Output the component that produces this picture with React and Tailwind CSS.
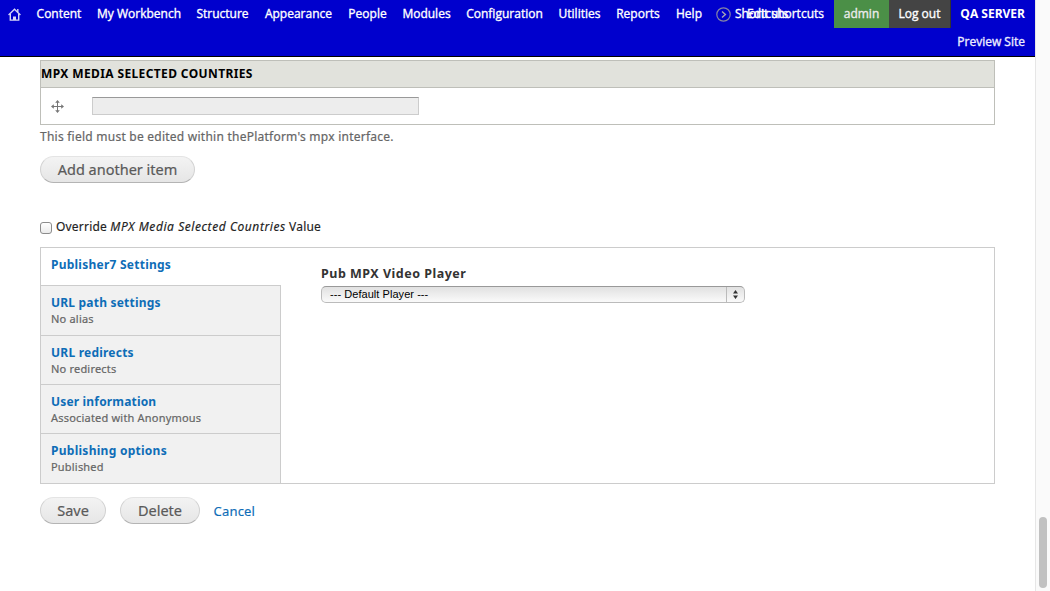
import React from "react";

const NAV = [
  ["Content", "w-[45px]"],
  ["My Workbench", "w-[83px]"],
  ["Structure", "w-[52px]"],
  ["Appearance", "w-[68px]"],
  ["People", "w-[38px]"],
  ["Modules", "w-[48px]"],
  ["Configuration", "w-[76px]"],
  ["Utilities", "w-[42px]"],
  ["Reports", "w-[43px]"],
  ["Help", "w-[27px]"],
];

const TABS = [
  ["URL path settings", "No alias", "h-[50px]", "tracking-[0.2px]"],
  ["URL redirects", "No redirects", "h-[49px]", "tracking-[0.22px]"],
  ["User information", "Associated with Anonymous", "h-[49px]", "tracking-[0.17px]"],
  ["Publishing options", "Published", "h-[49px]", "tracking-[0.27px]"],
];

function Pill({ children, className }) {
  return (
    <button
      className={`flex h-[27px] shrink-0 items-center justify-center rounded-full border border-[#e4e4e4] border-x-[#d2d2d2] border-b-[#b4b4b4] bg-gradient-to-b from-[#f3f3f3] to-[#e6e6e6] text-[14.5px] leading-none whitespace-nowrap text-[#5a5a5a] [-webkit-text-stroke:0.2px] ${className}`}
    >
      {children}
    </button>
  );
}

function Toolbar() {
  return (
    <header className="flex h-[57px] w-[1035px] flex-col border-b border-black bg-[#0000cd] font-['Open_Sans',sans-serif] text-[12px] font-medium text-white [-webkit-text-stroke:0.35px]">
      <div className="flex h-7 items-center whitespace-nowrap">
        <svg className="ml-2 h-[13px] w-[13px] shrink-0" viewBox="0 0 13 13" fill="none" stroke="#d5d5f5" strokeWidth="1.4">
          <path d="M0.6 7 L6.5 1.2 L12.4 7" />
          <path d="M2.3 6v6.1h8.4V6M9.8 1v3" />
          <path d="M5 8.5h3v3.5H5z" fill="#d5d5f5" stroke="none" />
        </svg>
        <nav className="ml-[15.5px] flex gap-4">
          {NAV.map(([label, width]) => (
            <a key={label} className={`${width} flex justify-center`}>
              {label}
            </a>
          ))}
        </nav>
        <svg className="ml-[13.5px] h-[15px] w-[15px] shrink-0" viewBox="0 0 15 15" fill="none" stroke="#8585a5" strokeWidth="1.2">
          <circle cx="7.5" cy="7.5" r="6.7" />
          <path d="M6 4.5l3.4 3L6 10.5" stroke="#a5a5b5" strokeWidth="1.4" />
        </svg>
        <div className="relative ml-1 flex w-[89px] justify-end">
          <span className="absolute left-0">Shortcuts</span>
          <span>Edit shortcuts</span>
        </div>
        <a className="ml-[10px] flex h-7 w-[55px] items-center justify-center bg-[#4b8f47] text-[#ececec]">admin</a>
        <a className="flex h-7 w-[62px] items-center justify-center border-r border-[#333] bg-[#444]">Log out</a>
        <b className="mr-[10px] ml-auto font-bold [-webkit-text-stroke:0]">QA SERVER</b>
      </div>
      <div className="flex h-7 items-center justify-end pr-[10px]">
        <a className="text-[#ededff]">Preview Site</a>
      </div>
    </header>
  );
}

export default function App() {
  return (
    <div className="flex h-[591px] w-[1050px] overflow-hidden bg-white font-['Noto_Sans','Open_Sans',sans-serif] text-[12px] text-[#333]">
      <div className="w-[1035px]">
        <Toolbar />
        <main className="flex w-[995px] flex-col pt-[3px] pl-10">
          <section className="h-[65px] border border-[#bebfb9]">
            <h2 className="flex h-[27px] items-center border-b border-[#bebfb9] bg-[#e1e2dc] text-[12px] font-bold tracking-[0.38px] text-black">
              MPX MEDIA SELECTED COUNTRIES
            </h2>
            <div className="flex h-9 items-center pl-[10px]">
              <svg className="h-[13px] w-[13px]" viewBox="0 0 13 13" fill="#777">
                <path d="M6 2h1v9H6zM2 6h9v1H2z" />
                <path d="M6.5 0l2.3 2.8H4.2zM6.5 13l2.3-2.8H4.2zM0 6.5l2.8-2.3v4.6zM13 6.5l-2.8-2.3v4.6z" />
              </svg>
              <input
                disabled
                className="ml-7 h-[18px] w-[327px] border border-[#ccc] border-t-[#999] bg-[#ededed]"
              />
            </div>
          </section>
          <p className="mt-[3px] h-[18px] text-[12px] leading-[18px] tracking-[0.24px] text-[#666] [-webkit-text-stroke:0.2px]">
            This field must be edited within thePlatform's mpx interface.
          </p>
          <Pill className="mt-[10px] w-[155px]">Add another item</Pill>
          <label className="mt-[35px] flex h-[18px] items-center">
            <span className="mt-[2px] h-3 w-3 rounded-[3px] border border-[#8c8c8c] bg-gradient-to-b from-[#fff] to-[#ebebeb]" />
            <span className="ml-1 leading-[18px] tracking-[0.2px] whitespace-nowrap text-[#222] [-webkit-text-stroke:0.15px]">
              Override <em className="tracking-[0.57px]">MPX Media Selected Countries</em> Value
            </span>
          </label>
          <section className="mt-[11px] flex h-[237px] border border-[#ccc]">
            <div className="flex w-60 flex-col">
              <div className="h-[37px] pt-2 pl-[10px] text-[12px] leading-[18px] font-bold tracking-[0.24px] text-[#0e6db7]">Publisher7 Settings</div>
              <div className="flex-1 border-r border-[#ccc] bg-[#f1f1f1]">
                {TABS.map(([title, note, height, tracking]) => (
                  <div key={title} className={`${height} border-t border-[#ccc] pt-2 pl-[10px]`}>
                    <div className={`text-[12px] leading-[18px] font-bold text-[#0e6db7] ${tracking}`}>{title}</div>
                    <div className="text-[11px] leading-[13px] tracking-[0.2px] text-[#666] [-webkit-text-stroke:0.2px]">{note}</div>
                  </div>
                ))}
              </div>
            </div>
            <div className="pt-4 pl-10">
              <div className="h-[22px] text-[12.5px] leading-5 font-bold tracking-[0.5px]">Pub MPX Video Player</div>
              <div className="flex h-[17px] w-[424px] rounded-[5px] border border-[#bbb] border-t-[#999] bg-gradient-to-b from-[#e1e1e1] to-[#fafafa] font-['Liberation_Sans',Arial,sans-serif] text-[11px] tracking-[0.05px] text-black">
                <span className="flex-1 pl-2 leading-[15px]">--- Default Player ---</span>
                <span className="flex w-[18px] items-center justify-center border-l border-[#bbb] pr-px">
                  <svg className="h-[9px] w-[5px]" viewBox="0 0 5 9" fill="#333">
                    <path d="M2.5 0L5 3.5H0zM2.5 9L5 5.5H0z" />
                  </svg>
                </span>
              </div>
            </div>
          </section>
          <div className="mt-[13px] flex items-center">
            <Pill className="w-[66px]">Save</Pill>
            <Pill className="ml-[14px] w-20">Delete</Pill>
            <a className="ml-[13.5px] pt-[2px] text-[13px] tracking-[0.2px] text-[#0e6db7] [-webkit-text-stroke:0.15px]">Cancel</a>
          </div>
        </main>
      </div>
      <aside className="flex w-[15px] items-end justify-center border-l border-[#e6e6e6] bg-[#fafafa] pb-[3px]">
        <div className="h-[71px] w-2 rounded-full bg-[#c1c1c1]" />
      </aside>
    </div>
  );
}
